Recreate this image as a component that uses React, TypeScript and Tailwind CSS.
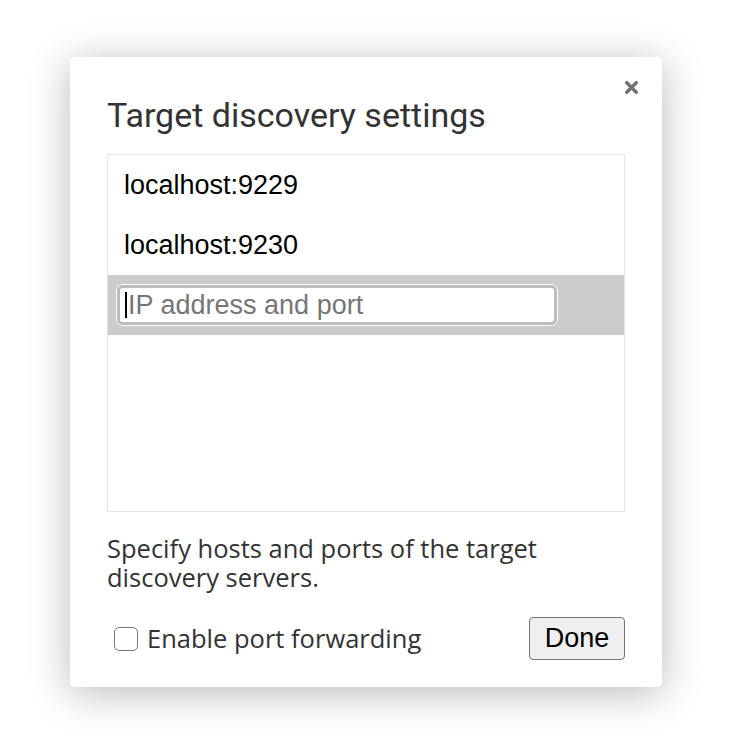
import { X } from 'lucide-react';

const hosts = ['localhost:9229', 'localhost:9230'];

export default function App() {
  return (
    <div className="min-h-[752px] w-[730px] bg-white pl-[70px] pt-[57px]">
      {/* Dialog */}
      <div className="relative flex h-[630px] w-[592px] flex-col rounded-[5px] bg-white px-[37px] shadow-[0_6px_40px_rgba(0,0,0,0.28)]">
        <button className="absolute right-[21px] top-[21px] text-[#727272]">
          <X className="h-[19px] w-[19px]" strokeWidth={4.5} />
        </button>

        <h1 className="pt-[37px] text-[34px] leading-[42px] text-[#333] [font-family:Roboto,sans-serif]">
          Target discovery settings
        </h1>

        {/* Host list */}
        <div className="mt-[18px] flex h-[358px] flex-col border border-[#e6e6e6] [font-family:'Liberation_Sans',Arial,sans-serif]">
          {hosts.map((h) => (
            <div key={h} className="flex h-[60px] items-center px-[16px] text-[27px] text-black">
              {h}
            </div>
          ))}
          <div className="flex h-[60px] items-center bg-[#cccccc] px-[8px]">
            <div className="rounded-[7px] border border-white">
              <div className="flex h-[40px] w-[440px] items-center rounded-[6px] border-[3px] border-[#bdbdbd] bg-white pl-[5px]">
                <span className="mr-[1px] h-[26px] w-[2px] bg-black" />
                <span className="text-[27px] text-[#767676]">IP address and port</span>
              </div>
            </div>
          </div>
        </div>

        <p className="mt-[22px] text-[25.5px] leading-[29px] text-[#333] [font-family:'Open_Sans',sans-serif]">
          Specify hosts and ports of the target discovery servers.
        </p>

        <div className="mt-auto mb-[27px] flex items-center justify-between">
          <label className="ml-[7px] flex items-center gap-[9px] text-[25.5px] text-[#333] [font-family:'Open_Sans',sans-serif]">
            <span className="h-[24px] w-[24px] rounded-[5px] border-[1.5px] border-[#767676] bg-white" />
            Enable port forwarding
          </label>
          <button className="h-[43px] w-[96px] rounded-[4px] border border-[#767676] bg-[#efefef] text-[27px] text-black [font-family:'Liberation_Sans',Arial,sans-serif]">
            Done
          </button>
        </div>
      </div>
    </div>
  );
}
